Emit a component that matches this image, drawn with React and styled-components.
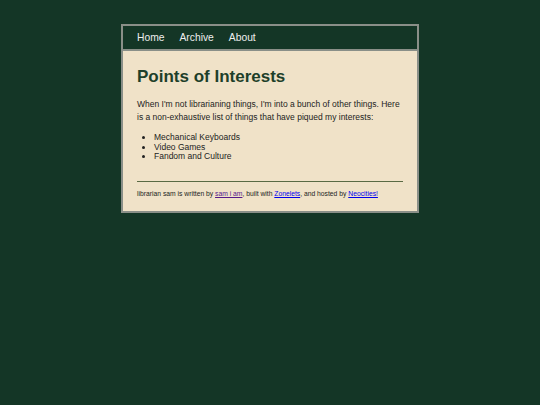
import React from "react";
import styled, { createGlobalStyle } from "styled-components";

const GlobalStyle = createGlobalStyle`
  html, body {
    margin: 0;
    padding: 0;
    background: #143626;
  }
  body {
    font-family: "Liberation Sans", Arial, sans-serif;
    color: #222;
  }
`;

const Page = styled.div`
  padding-top: 24px;
`;

const Container = styled.div`
  width: 294px;
  margin: 0 auto;
  border: 2px solid #8a8f88;
  background: #f0e2c8;
`;

const Nav = styled.nav`
  display: flex;
  align-items: center;
  gap: 15px;
  height: 23px;
  padding: 0 14px;
  background: #143626;
  border-bottom: 2px solid #8a8f88;
`;

const NavLink = styled.a`
  color: #eeeeee;
  font-size: 10.3px;
  text-decoration: none;
`;

const Main = styled.main`
  padding: 16px 14px 13px;
`;

const Title = styled.h1`
  margin: 0;
  font-size: 17px;
  line-height: 20px;
  font-weight: bold;
  color: #1e3f2a;
`;

const Paragraph = styled.p`
  margin: 11px 0 0;
  font-size: 8.5px;
  line-height: 13px;
`;

const List = styled.ul`
  margin: 9px 0 0;
  padding-left: 17px;
  font-size: 8.5px;
  line-height: 9.7px;
`;

const Rule = styled.hr`
  margin: 19px 0 0;
  border: none;
  border-top: 1px solid #5a6a44;
  height: 0;
`;

const Footer = styled.footer`
  margin-top: 8px;
  font-size: 6.75px;
  line-height: 8px;
`;

const FootLink = styled.a`
  color: ${(p) => (p.$visited ? "#551a8b" : "#0000ee")};
  text-decoration: underline;
`;

const interests = ["Mechanical Keyboards", "Video Games", "Fandom and Culture"];

export default function App() {
  return (
    <Page>
      <GlobalStyle />
      <Container>
        <Nav>
          <NavLink href="#">Home</NavLink>
          <NavLink href="#">Archive</NavLink>
          <NavLink href="#">About</NavLink>
        </Nav>
        <Main>
          <Title>Points of Interests</Title>
          <Paragraph>
            When I'm not librarianing things, I'm into a bunch of other things. Here
            is a non-exhaustive list of things that have piqued my interests:
          </Paragraph>
          <List>
            {interests.map((item) => (
              <li key={item}>{item}</li>
            ))}
          </List>
          <Rule />
          <Footer>
            librarian sam is written by <FootLink $visited href="#">sam i am</FootLink>, built
            with <FootLink href="#">Zonelets</FootLink>, and hosted by{" "}
            <FootLink href="#">Neocities!</FootLink>
          </Footer>
        </Main>
      </Container>
    </Page>
  );
}
